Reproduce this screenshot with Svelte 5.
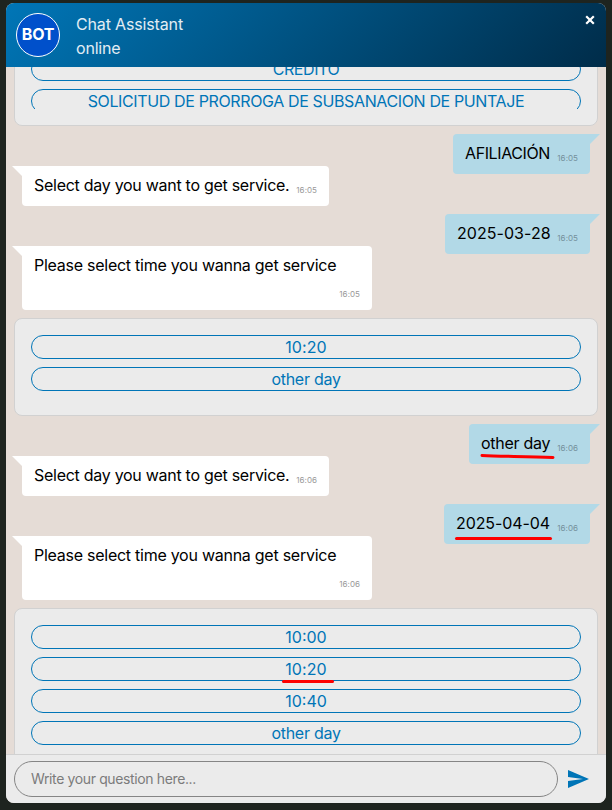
<script>
  const firstOptions = [
    { text: 'CREDITO', spacing: -0.4 },
    { text: 'SOLICITUD DE PRORROGA DE SUBSANACION DE PUNTAJE', spacing: -0.37 }
  ];
  const other = { text: 'other day', spacing: -0.27 };
  const earlyOptions = [{ text: '10:20', spacing: 0.1 }, other];
  const lateOptions = [
    { text: '10:00', spacing: 0 },
    { text: '10:20', spacing: 0.1, marked: true },
    { text: '10:40', spacing: 0 },
    other
  ];
</script>

{#snippet bubble(side, text, time, width, spacing, tall = false, mark = '')}
  <div class="row {side}">
    <div class="bubble" class:tall style="width: {width}px">
      <span class="text" style="letter-spacing: {spacing}px">{text}</span>
      <span class="time">{time}</span>
      {#if mark}
        <svg class="mark" viewBox="0 0 {width} 40"><path d={mark} /></svg>
      {/if}
    </div>
  </div>
{/snippet}

{#snippet choices(items, kind = '')}
  <div class="card {kind}">
    <div class="options">
      {#each items as item}
        <button class="option">
          <span style="letter-spacing: {item.spacing}px">{item.text}</span>
          {#if item.marked}
            <svg class="mark underline" viewBox="0 0 54 6"><path d="M2.5 2.5H51.5" /></svg>
          {/if}
        </button>
      {/each}
    </div>
  </div>
{/snippet}

<div class="page">
  <main class="chat">
    <header>
      <div class="avatar"><span>BOT</span></div>
      <div class="title">
        <div class="name">Chat Assistant</div>
        <div class="status">online</div>
      </div>
      <button class="close" aria-label="Close">
        <svg width="10" height="10" viewBox="0 0 10 10"><path d="M1.2 1.2 8.8 8.8M8.8 1.2 1.2 8.8" /></svg>
      </button>
    </header>

    <section class="messages">
      {@render choices(firstOptions, 'clipped')}
      {@render bubble('out', 'AFILIACIÓN', '16:05', 137, -0.4)}
      {@render bubble('in', 'Select day you want to get service.', '16:05', 307, -0.28)}
      {@render bubble('out', '2025-03-28', '16:05', 145, 0.05)}
      {@render bubble('in', 'Please select time you wanna get service', '16:05', 350, -0.26, true)}
      {@render choices(earlyOptions)}
      {@render bubble('out', 'other day', '16:06', 121, -0.27, false, 'M13 31.5C32 32.5 57 32.3 84 33.5')}
      {@render bubble('in', 'Select day you want to get service.', '16:06', 307, -0.28)}
      {@render bubble('out', '2025-04-04', '16:06', 146, -0.1, false, 'M12.5 34.5H106.5')}
      {@render bubble('in', 'Please select time you wanna get service', '16:06', 350, -0.26, true)}
      {@render choices(lateOptions)}
    </section>

    <footer>
      <input placeholder="Write your question here..." aria-label="Question" />
      <button class="send" aria-label="Send">
        <svg width="21" height="18" viewBox="0 0 21 18"><path d="M0 18 21 9 0 0v7l15 2-15 2z" /></svg>
      </button>
    </footer>
  </main>
</div>

<style>
  :global(body) { margin: 0; background: #1e241f; }
  * { box-sizing: border-box; }
  button { font: inherit; background: none; border: 0; padding: 0; }
  svg { display: block; }
  .page {
    width: 612px;
    height: 810px;
    padding: 3px 6px 7px;
    background: #1e241f;
    overflow: hidden;
    font: 16px/24px Inter, "Liberation Sans", sans-serif;
  }
  .chat {
    display: flex;
    flex-direction: column;
    width: 600px;
    height: 800px;
    border-radius: 8px;
    overflow: hidden;
    background: #e5dcd6;
  }
  header {
    flex: none;
    display: flex;
    height: 64px;
    padding: 10px;
    background: linear-gradient(135deg, #0076b7, #002c49);
    color: #e2edf4;
  }
  .avatar {
    display: flex;
    align-items: center;
    justify-content: center;
    width: 44px;
    height: 44px;
    border: 1px solid #fff;
    border-radius: 50%;
    background: #0050cb;
    color: #fff;
    font-weight: 700;
    letter-spacing: -0.2px;
  }
  .avatar span { margin-top: -2px; }
  .title { flex: 1; margin: -1px 0 0 16px; }
  .name { letter-spacing: -0.15px; }
  .status { letter-spacing: -0.2px; }
  .close { align-self: flex-start; width: 10px; height: 10px; margin: 2px 1px 0 0; }
  .close path { fill: none; stroke: #fff; stroke-width: 2.2; }
  .messages {
    flex: 1;
    min-height: 0;
    display: flex;
    flex-direction: column;
    padding: 0 8px;
    overflow: hidden;
  }
  .card {
    flex: none;
    margin-bottom: 8px;
    padding: 16px;
    border: 1px solid #d1d1d1;
    border-radius: 8px;
    background: #ebebeb;
  }
  .clipped { margin-top: -27px; }
  .clipped .options { max-height: 52px; overflow: hidden; }
  .option {
    position: relative;
    display: flex;
    align-items: center;
    justify-content: center;
    width: 100%;
    height: 24px;
    margin-bottom: 8px;
    border: 1px solid #0075b7;
    border-radius: 12px;
    color: #0075b7;
    white-space: nowrap;
  }
  .row { flex: none; display: flex; margin-bottom: 8px; padding: 0 8px; }
  .out { justify-content: flex-end; margin-bottom: 0; }
  .out + .in { margin-top: -8px; }
  .bubble {
    position: relative;
    display: flex;
    justify-content: space-between;
    height: 40px;
    padding: 8px 12px;
    border-radius: 4px;
    color: #000;
    white-space: nowrap;
  }
  .text { margin-top: -1px; }
  .in .bubble { background: #fff; border-top-left-radius: 0; }
  .out .bubble { background: #b2d9e7; border-top-right-radius: 0; }
  .bubble::before {
    content: "";
    position: absolute;
    top: 0;
    width: 10px;
    height: 10px;
    background: inherit;
  }
  .in .bubble::before { left: -10px; clip-path: polygon(0 0, 100% 0, 100% 100%); }
  .out .bubble::before { right: -10px; clip-path: polygon(0 0, 100% 0, 0 100%); }
  .time {
    align-self: flex-end;
    line-height: 12px;
    margin-bottom: 2px;
    font-size: 8px;
    letter-spacing: 0.05px;
    color: #999;
  }
  .out .time { color: #74909b; }
  .tall { height: 64px; }
  .mark {
    position: absolute;
    inset: 0;
    width: 100%;
    height: 40px;
    overflow: visible;
  }
  .mark path { fill: none; stroke: #fe0000; stroke-width: 3; stroke-linecap: round; }
  .underline { inset: 21px auto auto 249px; width: 54px; height: 6px; }
  footer {
    flex: none;
    display: flex;
    align-items: center;
    height: 49px;
    padding: 0 8px;
    border-top: 1px solid #d1d1d1;
    background: #ebebeb;
  }
  input {
    width: 544px;
    height: 36px;
    padding: 0 16px 1px;
    border: 1px solid #858585;
    border-radius: 18px;
    outline: 0;
    background: transparent;
    color: #222;
    font: inherit;
    font-size: 14px;
    letter-spacing: -0.37px;
  }
  input::placeholder { color: #7b7b7b; opacity: 1; }
  .send { margin-left: 10px; }
  .send path { fill: #0075b7; }
</style>
